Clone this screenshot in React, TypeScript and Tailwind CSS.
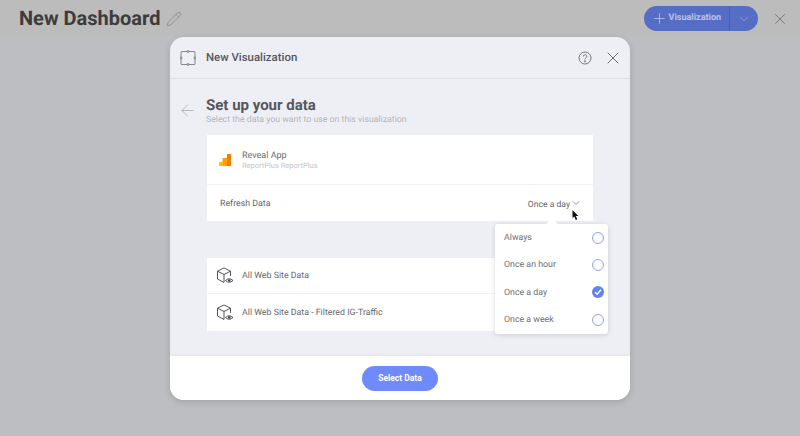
import { ChevronDown, Plus, X, ArrowLeft, Pencil } from 'lucide-react';

const font = { fontFamily: 'Roboto, sans-serif' };

function CubeEye() {
  return (
    <svg width="18" height="18" viewBox="0 0 18 18" fill="none" stroke="#3f4147" strokeWidth="0.9">
      <path d="M8 1 L14.5 4.2 V9 M8 1 L1.5 4.2 V12 L8 15.5 M1.5 4.2 L8 7.5 L14.5 4.2 M8 7.5 V15.5" strokeLinejoin="round" />
      <path d="M9.5 13.5 Q13 10 17 13.5 Q13 17 9.5 13.5 Z" fill="#fff" />
      <circle cx="13.2" cy="13.5" r="1.3" fill="#3f4147" stroke="none" />
    </svg>
  );
}

function VizIcon() {
  return (
    <svg width="16" height="16" viewBox="0 0 16 16" fill="none" stroke="#6a6c73" strokeWidth="0.8">
      <rect x="1" y="1.5" width="14" height="13" rx="0.5" />
      <circle cx="8" cy="1.5" r="1" fill="#eeeff4" />
      <circle cx="8" cy="14.5" r="1" fill="#eeeff4" />
      <circle cx="1" cy="8" r="1" fill="#eeeff4" />
      <circle cx="15" cy="8" r="1" fill="#eeeff4" />
    </svg>
  );
}

function AnalyticsIcon() {
  return (
    <svg width="12" height="12" viewBox="0 0 12 12">
      <rect x="0" y="8" width="5" height="4" rx="0.8" fill="#ffc107" />
      <rect x="3.5" y="4" width="5" height="8" fill="#ffa000" />
      <rect x="8" y="0" width="4" height="12" rx="0.6" fill="#f57c00" />
    </svg>
  );
}

function Radio({ checked }: { checked?: boolean }) {
  if (checked) {
    return (
      <span className="flex h-3 w-3 items-center justify-center rounded-full bg-[#6481f0]">
        <svg width="8" height="8" viewBox="0 0 8 8" fill="none" stroke="#fff" strokeWidth="1.5">
          <path d="M1 4.2 L3.2 6.2 L7 1.8" />
        </svg>
      </span>
    );
  }
  return <span className="h-3 w-3 rounded-full border border-[#8fa3f5] bg-white" />;
}

const options = [
  { label: 'Always' },
  { label: 'Once an hour' },
  { label: 'Once a day', checked: true },
  { label: 'Once a week' },
];

export default function App() {
  return (
    <div className="relative h-[436px] w-[800px] overflow-hidden bg-[#bdbec2] [text-rendering:geometricPrecision]" style={font}>
      {/* Top bar */}
      <div className="flex h-[37px] items-center bg-[#bcbcbc] pl-[19px] pr-[11px]">
        <span className="-mt-[1px] text-[20px] font-bold text-[#3c3c3c]">New Dashboard</span>
        <Pencil size={16} strokeWidth={1} className="ml-[6px] text-[#7d7d7d]" />
        <div className="ml-auto flex h-[25px] items-center rounded-full bg-[#566dc6] text-[#bcc4e4]">
          <div className="flex h-full items-center gap-[1px] border-r border-[#4a5fb2] pl-[7px] pr-[8px]">
            <Plus size={17} strokeWidth={1.1} />
            <span className="pt-[1px] text-[9px] font-bold">Visualization</span>
          </div>
          <div className="flex h-full w-[28px] items-center justify-center">
            <ChevronDown size={14} strokeWidth={1} />
          </div>
        </div>
        <X size={18} strokeWidth={1.1} className="ml-[13px] text-[#6f6f6f]" />
      </div>

      {/* Modal */}
      <div className="relative mx-auto flex h-[363px] w-[460px] flex-col overflow-hidden rounded-[14px] bg-[#eeeff4] shadow-[0_2px_6px_rgba(0,0,0,0.15)]">
        <div className="flex h-[42px] shrink-0 items-center border-b border-[#dfe0e4] pl-[10px] pr-[7px]">
          <VizIcon />
          <span className="ml-[10px] pt-[1px] text-[11.4px] font-medium text-[#55575e]">New Visualization</span>
          <svg className="ml-auto" width="14" height="14" viewBox="0 0 14 14" fill="none" stroke="#66686e" strokeWidth="0.9">
            <circle cx="7" cy="7" r="6" />
            <path d="M5.2 5.5 C5.2 3.2 8.8 3.2 8.8 5.4 C8.8 6.8 7 6.8 7 8.4" />
            <circle cx="7" cy="10.2" r="0.5" fill="#66686e" />
          </svg>
          <X size={20} strokeWidth={1} className="ml-[11px] text-[#55575e]" />
        </div>

        <div className="flex-1 pl-[8px] pr-[37px]">
          <div className="flex items-start pt-[18px]">
            <ArrowLeft size={19} strokeWidth={0.9} className="mt-[4px] text-[#9ea0a6]" />
            <div className="ml-[9px]">
              <div className="text-[15px] leading-[17px] font-bold text-[#55575e]">Set up your data</div>
              <div className="pt-[1px] text-[8.75px] leading-[11px] text-[#b4b5ba]">Select the data you want to use on this visualization</div>
            </div>
          </div>

          <div className="ml-[29px] mt-[9px] bg-white">
            <div className="flex h-[50px] items-center border-b border-[#f1f2f5] pl-[12px]">
              <AnalyticsIcon />
              <div className="ml-[11px] pt-[2px]">
                <div className="text-[9px] leading-[11px] text-[#6d6e73]">Reveal App</div>
                <div className="text-[7.5px] leading-[8px] text-[#c5c6ca]">ReportPlus ReportPlus</div>
              </div>
            </div>
            <div className="flex h-[36px] items-center pl-[13px] pr-[11px] text-[8.8px] text-[#66676c]">
              <span className="pt-[4px]">Refresh Data</span>
              <span className="ml-auto flex items-center text-[8.6px]">
                <span className="pt-[4px]">Once a day</span>
                <ChevronDown size={12} strokeWidth={1.4} className="mt-[1px]" />
              </span>
            </div>
          </div>

          <div className="ml-[29px] mt-[37px] bg-white">
            <div className="flex h-[36px] items-center gap-[8px] border-b border-[#f1f2f5] pl-[9px] text-[8.8px] text-[#66676c]">
              <CubeEye />
              <span className="pt-[3px]">All Web Site Data</span>
            </div>
            <div className="flex h-[37px] items-center gap-[8px] pl-[9px] text-[8.8px] text-[#66676c]">
              <CubeEye />
              <span className="pt-[3px]">All Web Site Data - Filtered IG-Traffic</span>
            </div>
          </div>
        </div>

        <div className="flex h-[44px] shrink-0 items-center justify-center bg-white shadow-[0_-1px_3px_rgba(0,0,0,0.06)]">
          <button className="flex h-[25px] w-[76px] items-center justify-center rounded-full bg-[#6f8afc] text-[8.5px] font-bold text-white">
            Select Data
          </button>
        </div>

        {/* Refresh options menu */}
        <div className="absolute left-[325px] top-[187px] w-[113px] rounded-[3px] bg-white pl-[9px] pr-[4px] shadow-[0_1px_5px_rgba(0,0,0,0.15)]">
          <span className="absolute -top-[4px] left-[53px] h-2 w-2 rotate-45 bg-white" />
          {options.map(o => (
            <div key={o.label} className="flex h-[27.4px] items-center justify-between text-[8.8px] text-[#6d6e73]">
              <span className="pt-[2px]">{o.label}</span>
              <Radio checked={o.checked} />
            </div>
          ))}
        </div>
      </div>

      {/* Mouse cursor */}
      <svg className="absolute left-[572px] top-[210px]" width="7" height="11" viewBox="0 0 7 11">
        <path d="M0.5 0 L0.5 8 L2.3 6.5 L3.8 10 L5.3 9.3 L3.8 6 L6.3 6 Z" fill="#111" />
      </svg>
    </div>
  );
}
